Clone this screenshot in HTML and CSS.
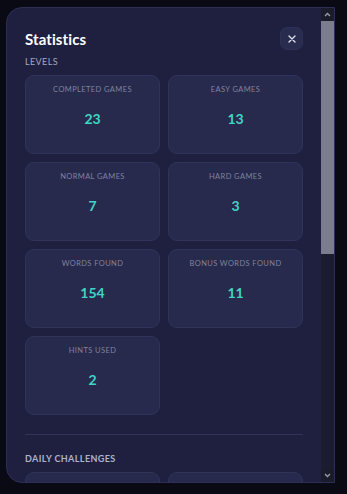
FILE: index.html
```html
<!DOCTYPE html>
<html>
   <head>
      <meta charset="utf-8">
      <title>Statistics</title>
      <link rel="stylesheet" href="styles.css">
   </head>
   <body>
      <div class="overlay">
         <div class="modal">
            <div class="modal-body">
               <div class="modal-head">
                  <h2 class="modal-title">Statistics</h2>
                  <button class="close-btn" type="button">
                     <svg width="8" height="8" viewBox="0 0 8 8"><path d="M1 1L7 7M7 1L1 7" stroke="#dcdde9" stroke-width="1.4" stroke-linecap="round"/></svg>
                  </button>
               </div>

               <div class="section-title">LEVELS</div>
               <div class="stat-grid">
                  <div class="stat-card"><div class="stat-label">COMPLETED GAMES</div><div class="stat-value">23</div></div>
                  <div class="stat-card"><div class="stat-label">EASY GAMES</div><div class="stat-value">13</div></div>
                  <div class="stat-card"><div class="stat-label">NORMAL GAMES</div><div class="stat-value">7</div></div>
                  <div class="stat-card"><div class="stat-label">HARD GAMES</div><div class="stat-value">3</div></div>
                  <div class="stat-card"><div class="stat-label">WORDS FOUND</div><div class="stat-value">154</div></div>
                  <div class="stat-card"><div class="stat-label">BONUS WORDS FOUND</div><div class="stat-value">11</div></div>
                  <div class="stat-card"><div class="stat-label">HINTS USED</div><div class="stat-value">2</div></div>
               </div>

               <div class="divider"></div>

               <div class="section-title daily">DAILY CHALLENGES</div>
               <div class="stat-grid">
                  <div class="stat-card"></div>
                  <div class="stat-card"></div>
               </div>
            </div>

            <div class="scrollbar">
               <div class="scroll-arrow">
                  <svg width="7" height="5" viewBox="0 0 7 5"><path d="M1 4L3.5 1.5L6 4" fill="none" stroke="#9c9cab" stroke-width="1.3"/></svg>
               </div>
               <div class="scroll-track">
                  <div class="scroll-thumb"></div>
               </div>
               <div class="scroll-arrow">
                  <svg width="7" height="5" viewBox="0 0 7 5"><path d="M1 1L3.5 3.5L6 1" fill="none" stroke="#9c9cab" stroke-width="1.3"/></svg>
               </div>
            </div>
         </div>
      </div>
   </body>
</html>
```

FILE: styles.css
```css
html, body { margin: 0; padding: 0; background: #0a0a15; }
body { font-family: Lato, "Noto Sans", sans-serif; }

.overlay { padding: 7px 12px 11px 6px; }

.modal { height: 476px;
         box-sizing: border-box;
         display: flex;
         background: #1f2040;
         border: 1px solid #2c2e55;
         border-radius: 16px 0 0 16px;
         overflow: hidden; }

.modal-body { flex: 1; padding: 19px 18px 0 18px; overflow: hidden; }

.modal-head { display: flex; align-items: center; justify-content: space-between; }
.modal-title { margin: 0; font-size: 15px; line-height: 20px; font-weight: 700; color: #ffffff; letter-spacing: 0.1px; }

.close-btn { width: 23px; height: 23px;
             padding: 0;
             border: 1px solid #2e3057;
             border-radius: 7px;
             background: #292b4f;
             display: flex; align-items: center; justify-content: center; }

.section-title { margin: 6px 0 7px 0;
                 font-size: 9px; line-height: 12px;
                 color: #a4a6c0; letter-spacing: 0.4px; }
.section-title.daily { margin: 18px 0 7px 0; font-weight: 700; color: #b0b2ca; }

.stat-grid { display: grid; grid-template-columns: 135px 135px; gap: 8px; }

.stat-card { height: 79px;
             box-sizing: border-box;
             background: #272a4c;
             border: 1px solid #30335a;
             border-radius: 9px;
             padding: 9px 4px 0 4px;
             text-align: center; }
.stat-label { font-size: 7.5px; line-height: 10px; color: #7f829f; letter-spacing: 0.4px; }
.stat-value { margin-top: 15px; font-size: 14px; line-height: 18px; font-weight: 700; color: #3ed6c4; }

.divider { height: 1px; background: #30335a; margin-top: 19px; }

.scrollbar { width: 13px; display: flex; flex-direction: column; background: #1b1c30; }
.scroll-arrow { height: 13px; display: flex; align-items: center; justify-content: center; background: #1a1b2b; }
.scroll-track { flex: 1; }
.scroll-thumb { height: 233px; background: #7b7c8e; }
```
